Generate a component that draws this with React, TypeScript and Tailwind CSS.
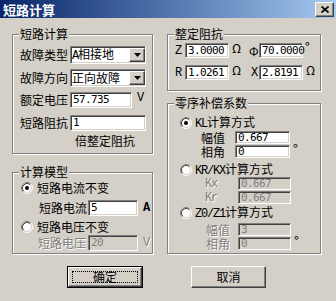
import React from "react";

const MONO = "font-['Liberation_Mono',monospace] tracking-[-1.2px]";
const NUM = "font-['DejaVu_Sans_Mono',monospace] text-[11px] tracking-[-0.6px]";
const sunken =
  "border border-t-[#808080] border-l-[#808080] border-b-white border-r-white shadow-[inset_1px_1px_0_#404040,inset_-1px_-1px_0_#d4d0c8]";
const raised =
  "bg-[#d4d0c8] border border-t-white border-l-white border-b-[#404040] border-r-[#404040] shadow-[inset_-1px_-1px_0_#808080]";
const dis = "text-[#808080] [text-shadow:1px_1px_0_#fff]";

function Group({ label, className, children }: { label: string; className: string; children?: React.ReactNode }) {
  return (
    <div className={`relative flex flex-col border border-[#808080] shadow-[inset_1px_1px_0_#fff,1px_1px_0_#fff] ${className}`}>
      <div className="absolute left-[6px] top-[-8px] bg-[#d4d0c8] px-[1px] leading-[14px]">{label}</div>
      {children}
    </div>
  );
}

function Field({ value, className, disabled }: { value: string; className: string; disabled?: boolean }) {
  return (
    <div
      className={`${sunken} ${disabled ? "bg-[#d4d0c8] text-[#808080]" : "bg-white text-black"} flex items-center pl-[2px] shrink-0 ${NUM} ${className}`}
    >
      {value}
    </div>
  );
}

function Combo({ children }: { children: React.ReactNode }) {
  return (
    <div className={`${sunken} bg-white w-[76px] h-[18px] flex items-center justify-between`}>
      <span className="pl-[1px]">{children}</span>
      <div className={`${raised} w-[16px] h-[14px] flex items-center justify-center`}>
        <svg width="7" height="4" viewBox="0 0 7 4">
          <path d="M0 0H7L3.5 4Z" fill="#000" />
        </svg>
      </div>
    </div>
  );
}

function Radio({ checked }: { checked?: boolean }) {
  return (
    <svg width="12" height="12" viewBox="0 0 12 12" className="shrink-0">
      <circle cx="6" cy="6" r="5" fill="#fff" />
      <path d="M2.11 9.89A5.5 5.5 0 0 1 9.89 2.11" stroke="#808080" fill="none" />
      <path d="M9.89 2.11A5.5 5.5 0 0 1 2.11 9.89" stroke="#fff" fill="none" />
      <path d="M2.82 9.18A4.5 4.5 0 0 1 9.18 2.82" stroke="#404040" fill="none" />
      <path d="M9.18 2.82A4.5 4.5 0 0 1 2.82 9.18" stroke="#d4d0c8" fill="none" />
      {checked && <circle cx="6" cy="6" r="2" fill="#000" />}
    </svg>
  );
}

export default function App() {
  return (
    <div className="w-[336px] h-[301px] bg-[#d4d0c8] overflow-hidden text-[12px] leading-[12px] text-black font-['Noto_Sans_CJK_SC',sans-serif]">
      {/* Title bar */}
      <div className="h-[18px] flex items-center justify-between bg-linear-to-r from-[#0a246a] to-[#a6caf0] pl-[3px] pr-[2px]">
        <span className="text-white font-bold text-[13px] leading-[13px]">短路计算</span>
        <div className={`${raised} w-[19px] h-[15px] flex items-center justify-center`}>
          <svg width="8" height="7" viewBox="0 0 8 7">
            <path d="M0.5 0.5L7.5 6.5M7.5 0.5L0.5 6.5" stroke="#000" strokeWidth="1.7" />
          </svg>
        </div>
      </div>

      <div className="flex pl-[12px] pt-[16px] gap-[14px]">
        {/* Left column */}
        <div className="w-[141px] flex flex-col">
          <Group label="短路计算" className="h-[120px] pt-[11px] pl-[7px]">
            <div className="flex items-center h-[18px]">
              <span className="w-[50px]">故障类型</span>
              <Combo>
                <span className={MONO}>A</span>相接地
              </Combo>
            </div>
            <div className="flex items-center h-[18px] mt-[5px]">
              <span className="w-[50px]">故障方向</span>
              <Combo>正向故障</Combo>
            </div>
            <div className="flex items-center h-[16px] mt-[5px]">
              <span className="w-[50px]">额定电压</span>
              <Field value="57.735" className="w-[62px] h-[16px]" />
              <span className={`${MONO} ml-[5px] self-start`}>V</span>
            </div>
            <div className="flex items-center h-[16px] mt-[7px]">
              <span className="w-[50px]">短路阻抗</span>
              <Field value="1" className="w-[76px] h-[16px]" />
            </div>
            <div className="h-[12px] mt-[4px] ml-[55px]">倍整定阻抗</div>
          </Group>

          <Group label="计算模型" className="mt-[18px] h-[82px] pt-[9px]">
            <div className="flex items-center h-[12px] pl-[8px] gap-[4px]">
              <Radio checked />
              <span>短路电流不变</span>
            </div>
            <div className="flex items-center h-[16px] mt-[6px] pl-[26px]">
              <span className="w-[49px]">短路电流</span>
              <Field value="5" className="w-[50px] h-[16px]" />
              <span className={`${MONO} ml-[5px] font-bold`}>A</span>
            </div>
            <div className="flex items-center h-[12px] mt-[5px] pl-[8px] gap-[4px]">
              <Radio />
              <span>短路电压不变</span>
            </div>
            <div className="flex items-center h-[16px] mt-[2px] pl-[25px]">
              <span className={`w-[50px] ${dis}`}>短路电压</span>
              <Field value="20" disabled className="w-[50px] h-[16px]" />
              <span className={`${MONO} ${dis} ml-[5px]`}>V</span>
            </div>
          </Group>

          <div className="mt-[12px] ml-[55px] w-[76px] h-[22px] border border-black">
            <div className={`${raised} w-full h-full flex items-center justify-center p-[3px]`}>
              <div className="w-full h-full border border-dotted border-black flex items-center justify-center">
                确定
              </div>
            </div>
          </div>
        </div>

        {/* Right column */}
        <div className="w-[154px] flex flex-col">
          <Group label="整定阻抗" className="h-[57px] pt-[8px] pl-[7px]">
            <div className="flex items-center h-[15px]">
              <span className={`${MONO} w-[10px]`}>Z</span>
              <Field value="3.0000" className="w-[44px] h-[15px]" />
              <span className="w-[20px] pl-[3px] self-start leading-[10px]">Ω</span>
              <span className="w-[10px]">Φ</span>
              <Field value="70.0000" className="w-[44px] h-[15px]" />
              <span className="pl-[2px] self-start leading-[8px] text-[13px]">°</span>
            </div>
            <div className="flex items-center h-[15px] mt-[7px]">
              <span className={`${MONO} w-[10px]`}>R</span>
              <Field value="1.0261" className="w-[44px] h-[15px]" />
              <span className="w-[20px] pl-[3px] self-start leading-[10px]">Ω</span>
              <span className={`${MONO} w-[10px] pl-[2px]`}>X</span>
              <Field value="2.8191" className="w-[44px] h-[15px]" />
              <span className="pl-[3px] self-start leading-[10px]">Ω</span>
            </div>
          </Group>

          <Group label="零序补偿系数" className="mt-[12px] h-[151px] pt-[13px]">
            <div className="flex items-center h-[12px] pl-[12px] gap-[3px]">
              <Radio checked />
              <span>
                <span className={MONO}>KL</span>计算方式
              </span>
            </div>
            <div className="flex items-center h-[13px] mt-[2px] pl-[33px]">
              <span className="w-[34px]">幅值</span>
              <Field value="0.667" className="w-[55px] h-[13px]" />
            </div>
            <div className="flex items-center h-[13px] mt-[1px] pl-[33px]">
              <span className="w-[34px]">相角</span>
              <Field value="0" className="w-[55px] h-[13px]" />
              <span className="pl-[3px] self-start leading-[8px] text-[13px]">°</span>
            </div>
            <div className="flex items-center h-[12px] mt-[6px] pl-[12px] gap-[3px]">
              <Radio />
              <span>
                <span className={MONO}>KR/KX</span>计算方式
              </span>
            </div>
            <div className="flex items-center h-[13px] mt-[1px] pl-[37px]">
              <span className={`${MONO} ${dis} w-[33px]`}>Kx</span>
              <Field value="0.667" disabled className="w-[53px] h-[13px]" />
            </div>
            <div className="flex items-center h-[13px] mt-[1px] pl-[37px]">
              <span className={`${MONO} ${dis} w-[33px]`}>Kr</span>
              <Field value="0.667" disabled className="w-[53px] h-[13px]" />
            </div>
            <div className="flex items-center h-[12px] mt-[3px] pl-[12px] gap-[3px]">
              <Radio />
              <span>
                <span className={MONO}>Z0/Z1</span>计算方式
              </span>
            </div>
            <div className="flex items-center h-[13px] mt-[4px] pl-[38px]">
              <span className={`${dis} w-[32px]`}>幅值</span>
              <Field value="3" disabled className="w-[53px] h-[13px]" />
            </div>
            <div className="flex items-center h-[13px] mt-[1px] pl-[38px]">
              <span className={`${dis} w-[32px]`}>相角</span>
              <Field value="0" disabled className="w-[53px] h-[13px]" />
              <span className="pl-[3px] self-start leading-[8px] text-[13px]">°</span>
            </div>
          </Group>

          <div className={`${raised} mt-[12px] ml-[24px] w-[75px] h-[22px] flex items-center justify-center`}>
            取消
          </div>
        </div>
      </div>
    </div>
  );
}
